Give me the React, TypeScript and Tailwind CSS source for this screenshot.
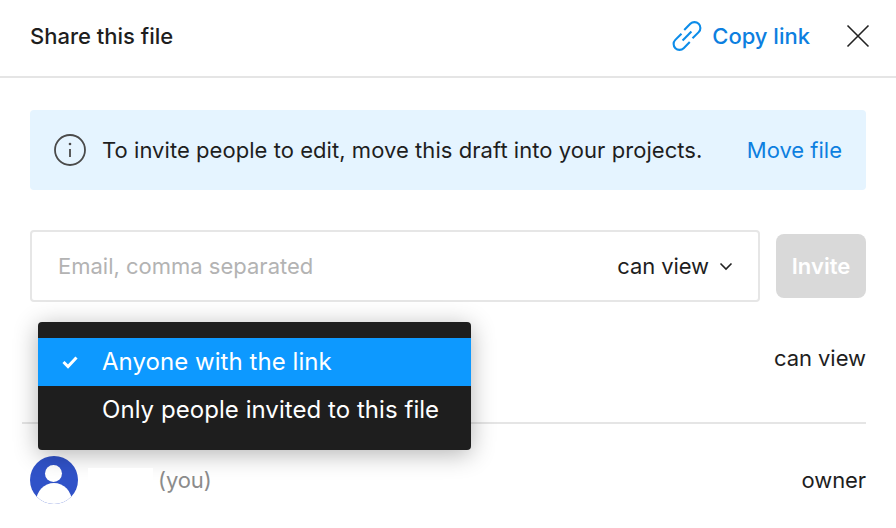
import React from "react";

export default function App() {
  return (
    <div className="relative w-[896px] h-[528px] overflow-hidden bg-white text-[#1e1e1e] font-['Inter',sans-serif]">
      <header className="h-[78px] border-b-2 border-[#e5e5e5] flex items-center pl-[30px] pr-[26px] pb-[4px]">
        <h1 className="text-[22px] font-medium leading-none flex-1">Share this file</h1>
        <div className="flex items-center gap-[9px] text-[#0d7fe0]">
          <svg width="32" height="32" viewBox="1.5 1.5 29 29" fill="none" stroke="#0c8ce9" strokeWidth="1.9">
            <path d="M13.5 10.5 L19 5a5.3 5.3 0 0 1 7.6 7.5 L21 18" />
            <path d="M18.5 21.5 L13 27a5.3 5.3 0 0 1-7.6-7.5 L11 14" />
            <path d="M12 20 L20 12" />
          </svg>
          <span className="text-[22px] font-medium leading-none">Copy link</span>
        </div>
        <svg className="ml-[36px]" width="24" height="24" viewBox="0 0 24 24" fill="none" stroke="#222" strokeWidth="1.6">
          <path d="M1.5 1.5 L22.5 22.5 M22.5 1.5 L1.5 22.5" />
        </svg>
      </header>

      <main className="pt-[32px] pl-[30px] pr-[30px]">
        <div className="h-[80px] rounded-[4px] bg-[#e5f4ff] flex items-center pl-[24px] pr-[24px]">
          <svg width="32" height="32" viewBox="0 0 32 32" fill="none" stroke="#4a4a4a" strokeWidth="1.8">
            <circle cx="16" cy="16" r="15" />
            <path d="M16 15 V23" />
            <circle cx="16" cy="10" r="1.3" fill="#4a4a4a" stroke="none" />
          </svg>
          <span className="ml-[16px] flex-1 text-[22px] leading-none tracking-[0.05px]">To invite people to edit, move this draft into your projects.</span>
          <span className="text-[22px] leading-none text-[#0d7fe0]">Move file</span>
        </div>

        <div className="mt-[40px] flex items-center gap-[16px]">
          <div className="w-[730px] h-[72px] rounded-[4px] border-2 border-[#e6e6e6] flex items-center pl-[26px] pr-[25px]">
            <span className="flex-1 text-[22px] leading-none text-[#b3b3b3]">Email, comma separated</span>
            <span className="text-[22px] leading-none tracking-[-0.1px]">can view</span>
            <svg className="ml-[10px]" width="14" height="14" viewBox="0 0 14 14" fill="none" stroke="#222" strokeWidth="1.6">
              <path d="M1.5 4.5 L7 10 L12.5 4.5" />
            </svg>
          </div>
          <button className="w-[90px] h-[64px] rounded-[8px] bg-[#d9d9d9] text-white text-[22px] font-semibold leading-none">Invite</button>
        </div>

        <div className="mt-[18px] h-[76px] flex items-center justify-end">
          <span className="text-[22px] leading-none tracking-[-0.05px]">can view</span>
        </div>
      </main>

      <div className="ml-[22px] mr-[30px] mt-[26px] h-[2px] bg-[#e5e5e5]" />

      <div className="pl-[30px] pr-[30px] mt-[32px] flex items-center">
        <svg width="48" height="48" viewBox="0 0 48 48">
          <defs>
            <clipPath id="avatar"><circle cx="24" cy="24" r="24" /></clipPath>
          </defs>
          <g clipPath="url(#avatar)">
            <rect width="48" height="48" fill="#3052c8" />
            <circle cx="23.5" cy="17.5" r="8.5" fill="#fff" />
            <ellipse cx="24" cy="46" rx="18" ry="19" fill="#fff" />
          </g>
        </svg>
        <span className="relative z-10 ml-[10px] w-[65px] h-[24px] bg-white" />
        <span className="ml-[5px] flex-1 text-[22px] leading-none tracking-[-0.1px] text-[#8c8c8c]">(you)</span>
        <span className="text-[22px] leading-none tracking-[-0.1px]">owner</span>
      </div>

      <div className="absolute left-[38px] top-[322px] w-[433px] h-[128px] py-[16px] rounded-[4px] bg-[#1e1e1e] text-white shadow-[0_4px_24px_rgba(0,0,0,0.3)]">
        <div className="h-[48px] bg-[#0d99ff] flex items-center">
          <svg className="ml-[24px]" width="16" height="16" viewBox="0 0 16 16" fill="none" stroke="#fff" strokeWidth="3">
            <path d="M1.5 8 L6 12.5 L14.5 3.5" />
          </svg>
          <span className="ml-[24px] text-[24px] leading-none tracking-[0.05px]">Anyone with the link</span>
        </div>
        <div className="h-[48px] flex items-center pl-[64px]">
          <span className="text-[24px] leading-none tracking-[0.05px]">Only people invited to this file</span>
        </div>
      </div>
    </div>
  );
}
